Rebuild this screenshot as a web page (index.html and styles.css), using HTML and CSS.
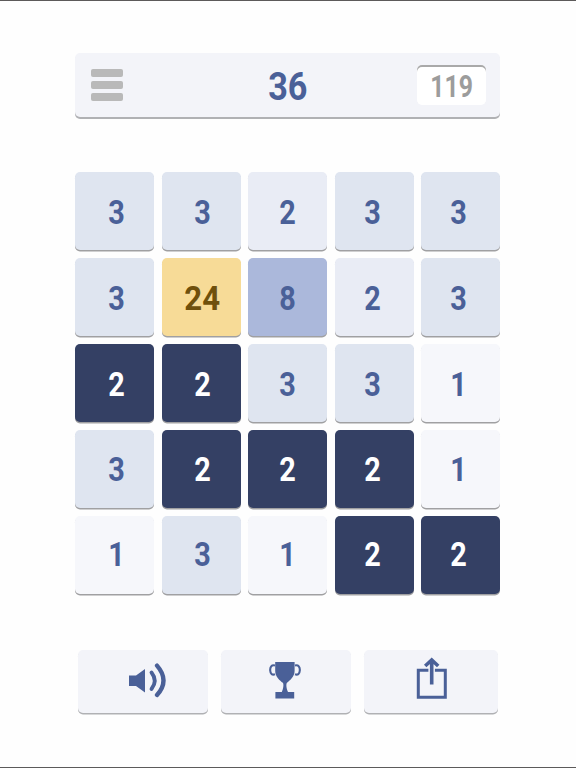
FILE: index.html
```
<!DOCTYPE html>
<html lang="en">
<head>
    <meta charset="UTF-8">
    <meta name="viewport" content="width=device-width, initial-scale=1.0">
    <title>Number Tiles</title>
    <link rel="stylesheet" href="styles.css">
</head>
<body>
    <div class="game">
        <div class="header">
            <div class="menu">
                <i></i>
                <i></i>
                <i></i>
            </div>
            <div class="score"><span>36</span></div>
            <div class="best"><span>119</span></div>
        </div>
        <ul class="board">
            <li class="n3"><span>3</span></li>
            <li class="n3"><span>3</span></li>
            <li class="n2"><span>2</span></li>
            <li class="n3"><span>3</span></li>
            <li class="n3"><span>3</span></li>

            <li class="n3"><span>3</span></li>
            <li class="n24"><span>24</span></li>
            <li class="n8"><span>8</span></li>
            <li class="n2"><span>2</span></li>
            <li class="n3"><span>3</span></li>

            <li class="on"><span>2</span></li>
            <li class="on"><span>2</span></li>
            <li class="n3"><span>3</span></li>
            <li class="n3"><span>3</span></li>
            <li class="n1"><span>1</span></li>

            <li class="n3"><span>3</span></li>
            <li class="on"><span>2</span></li>
            <li class="on"><span>2</span></li>
            <li class="on"><span>2</span></li>
            <li class="n1"><span>1</span></li>

            <li class="n1"><span>1</span></li>
            <li class="n3"><span>3</span></li>
            <li class="n1"><span>1</span></li>
            <li class="on"><span>2</span></li>
            <li class="on"><span>2</span></li>
        </ul>
        <div class="buttons">
            <div class="btn">
                <svg class="sound" width="38" height="36" viewBox="0 0 38 36">
                    <path d="M0 12.5H7L16 6V29.5L7 23H0Z" fill="#4a6098"/>
                    <path d="M22.5 9.5Q29 17.8 22.5 26" fill="none" stroke="#4a6098" stroke-width="3.8" stroke-linecap="round"/>
                    <path d="M28 2.6Q41 17.5 28 32" fill="none" stroke="#4a6098" stroke-width="4.3" stroke-linecap="round"/>
                </svg>
            </div>
            <div class="btn">
                <svg class="cup" width="32" height="38" viewBox="0 0 32 38">
                    <path d="M6.2 1H25.6V10C25.6 16 20.5 19.5 18 21.8C16.9 23 17.3 27.5 19 31H25.2V37.5H6.4V31H12.8C14.5 27.5 14.9 23 13.8 21.8C11 19.5 6.2 16 6.2 10Z" fill="#4a6098"/>
                    <path d="M6 4.5C2.5 3.6 1 6 1.2 9.5C1.4 13 3.3 14.3 6 13.2M26 4.5C29.5 3.6 31 6 30.8 9.5C30.6 13 28.7 14.3 26 13.2" fill="none" stroke="#4a6098" stroke-width="2.1"/>
                </svg>
            </div>
            <div class="btn share-btn">
                <svg class="share" width="32" height="43" viewBox="0 0 32 43">
                    <path d="M12.4 13.2H2.3V40.3H29.3V13.2H18.9" fill="none" stroke="#4a6098" stroke-width="3"/>
                    <path d="M15.7 27.5V3M9.2 9L15.7 3L22.2 9" fill="none" stroke="#4a6098" stroke-width="3.6"/>
                </svg>
            </div>
        </div>
    </div>
</body>
</html>
```
FILE: styles.css
```
*{
    padding: 0;
    margin: 0;
    list-style: none;
    box-sizing: border-box;
}
body{
    background-color: #fefefe;
    font-family: Roboto, "Open Sans", sans-serif;
    font-weight: 700;
}
.game{
    height: 768px;
    padding: 52px 75px 0 75.4px;
    border-top: 1px solid #5c5a5a;
    border-bottom: 1px solid #5c5a5a;
}
.header{
    display: flex;
    justify-content: space-between;
    align-items: center;
    width: 425px;
    height: 64px;
    padding: 0 14px 0 15.6px;
    border-radius: 5px;
    background-color: #f3f4f9;
    box-shadow: 0 2px 0 #b0b1b4;
}
.menu{
    display: flex;
    flex-direction: column;
    gap: 4px;
    width: 68px;
}
.menu i{
    width: 32px;
    height: 8px;
    border-radius: 2px;
    background-color: #b9b9b9;
}
.score{
    color: #4a6098;
    font-size: 38px;
    line-height: 64px;
    padding-top: 3px;
}
.score span{
    display: inline-block;
    transform: scaleX(.9);
}
.best{
    width: 69px;
    height: 40px;
    border-radius: 5px;
    background-color: #fff;
    box-shadow: inset 0 2px 0 #a9a9a9;
    color: #9c9c9c;
    font-size: 31px;
    line-height: 43px;
    text-align: center;
    margin-bottom: 1px;
}
.best span{
    display: inline-block;
    transform: scaleX(.8);
}
.board{
    display: grid;
    grid-template-columns: repeat(5, 79px);
    grid-auto-rows: 78px;
    gap: 8px 7.5px;
    margin-top: 54.5px;
}
.board li{
    display: flex;
    justify-content: center;
    align-items: center;
    border-radius: 5px;
    box-shadow: 0 1.5px 0 #a0a0a2;
    color: #4a6098;
    font-size: 33.5px;
    line-height: 40px;
    padding-top: 4px;
}
.board span{
    display: inline-block;
    transform: scaleX(.86);
}
/* digits sit slightly closer together than the tiles */
.board li:nth-child(5n+1){
    padding-left: 4px;
}
.board li:nth-child(5n+2){
    padding-left: 2px;
}
.board li:nth-child(5n+3){
    padding-right: 1px;
}
.board li:nth-child(5n+4){
    padding-right: 3px;
}
.board li:nth-child(5n+5){
    padding-right: 5px;
}
.board li:nth-child(n+16){
    padding-top: 2px;
}
.board li:nth-child(n+21){
    padding-top: 1px;
}
.board .n1{
    background-color: #f6f7fb;
}
.board .n2{
    background-color: #e9ecf5;
}
.board .n3{
    background-color: #dfe5f0;
}
.board .n8{
    background-color: #abb8db;
}
.board .n24{
    background-color: #f7db97;
    color: #6f500c;
}
.board .n24 span{
    transform: scaleX(.93);
}
.board .on{
    background-color: #344064;
    color: #fff;
}
.buttons{
    display: flex;
    gap: 13px;
    margin-top: 56.5px;
    padding-left: 2.4px;
}
.btn{
    display: flex;
    justify-content: center;
    width: 130px;
    height: 63px;
    border-radius: 5px;
    background-color: #f3f4f9;
    box-shadow: 0 1.5px 0 #b0b1b4;
}
.share-btn{
    width: 134px;
}
.sound{
    margin: 13px 0 0 11px;
}
.cup{
    margin: 11px 0 0 -2px;
}
.share{
    margin: 7px 0 0 2px;
}
```
